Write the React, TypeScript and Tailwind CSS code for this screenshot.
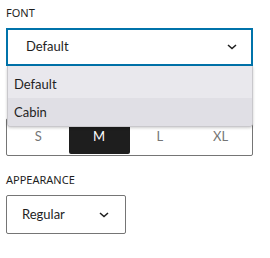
const Chevron = ({ className }: { className?: string }) => (
  <svg width="10" height="6" viewBox="0 0 10 6" className={className} fill="none">
    <path d="M1 1l4 3.6L9 1" stroke="#1e1e1e" strokeWidth="1.5" />
  </svg>
);

const sizes = ["S", "M", "L", "XL"];

export default function App() {
  return (
    <div className="w-[270px] h-[258px] bg-white pl-[6px] pt-[6px] text-[#1e1e1e] font-['Noto_Sans',sans-serif]">
      <div className="text-[11px] leading-[14px] h-[14px]">FONT</div>

      {/* Font select with open list */}
      <div className="relative mt-[8px] w-[247px]">
        <button className="flex items-center justify-between w-full h-[38px] border-2 border-[#0073aa] pl-[18px] pr-[14px] text-[13px] font-['Lato',sans-serif] bg-white">
          <span>Default</span>
          <Chevron />
        </button>

        <div className="mt-[52px] grid grid-cols-4 h-[38px] border border-[#757575] rounded-[2px] p-px text-[13px] text-[#757575] font-['Lato',sans-serif]">
          {sizes.map((s) => (
            <div
              key={s}
              className={
                s === "M"
                  ? "flex items-center justify-center bg-[#1e1e1e] text-white rounded-[2px]"
                  : "flex items-center justify-center"
              }
            >
              {s}
            </div>
          ))}
        </div>

        <ul className="absolute left-[1px] top-[38px] w-[246px] h-[61px] bg-[#e9e8ed] rounded-b-[4px] border border-[#c9c8cc] border-t-0 shadow-[0_1px_3px_rgba(0,0,0,0.2)] text-[13px] font-['Lato',sans-serif] overflow-hidden">
          <li className="h-[32px] flex items-center pt-[6px] pl-[6px]">Default</li>
          <li className="h-[29px] flex items-center pl-[6px] bg-[#e0dfe5]">Cabin</li>
        </ul>
      </div>

      <div className="mt-[17px] text-[11px] leading-[14px]">APPEARANCE</div>
      <button className="mt-[8px] flex items-center justify-between w-[120px] h-[39px] border border-[#757575] rounded-[2px] pl-[15px] pr-[16px] text-[13px] font-['Lato',sans-serif] bg-white">
        <span>Regular</span>
        <Chevron />
      </button>
    </div>
  );
}
